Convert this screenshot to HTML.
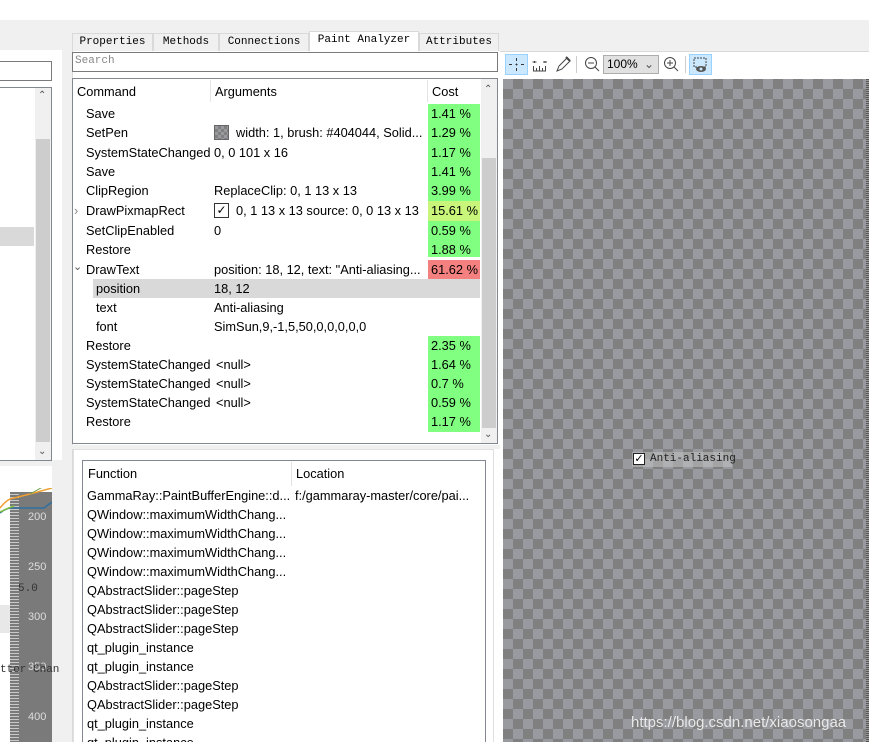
<!DOCTYPE html>
<html><head><meta charset="utf-8"><style>
*{margin:0;padding:0;box-sizing:border-box}
html,body{width:869px;height:742px;overflow:hidden}
body{background:#f0f0f0;font-family:"Liberation Sans",sans-serif;font-size:12.8px;color:#000;position:relative}
.a{position:absolute}
.t{position:absolute;white-space:nowrap;line-height:19px}
.mono{font-family:"Liberation Mono",monospace;font-size:11px}
.tab{position:absolute;top:33px;height:18px;border:1px solid #d9d9d9;border-bottom:none;background:#f0f0f0;font-family:"Liberation Mono",monospace;font-size:11px;line-height:17px;text-align:center}
.g{background:#80ff80}
.chk{background:conic-gradient(#808080 25%,#999a9f 0 50%,#808080 0 75%,#999a9f 0);background-size:20px 20px}
</style></head><body>
<div class="a" style="left:0;top:0;width:869px;height:20px;background:#fff"></div>
<div class="a" style="left:0;top:50px;width:62px;height:410px;background:#fff"></div>
<div class="a" style="left:0;top:61px;width:52px;height:20px;border:1px solid #7a7a7a;border-left:none;background:#fff"></div>
<div class="a" style="left:0;top:87px;width:52px;height:374px;border:1px solid #828790;border-left:none;background:#fff"></div>
<div class="a" style="left:0;top:227px;width:34px;height:19px;background:#d9d9d9"></div>
<div class="a" style="left:35px;top:88px;width:16px;height:372px;background:#f0f0f0"></div>
<div class="a" style="left:36px;top:139px;width:14px;height:303px;background:#cdcdcd"></div>
<div class="t" style="left:38px;top:86px;font-size:10px;color:#555">&#8963;</div>
<div class="t" style="left:38px;top:442px;font-size:10px;color:#555">&#8964;</div>
<div class="a" style="left:0;top:466px;width:52px;height:276px;background:#fff"></div>
<div class="a" style="left:0;top:605px;width:30px;height:28px;background:#e8e8e8"></div>
<div class="a" style="left:10px;top:492px;width:42px;height:250px;background:#7a7a7a"></div>
<div class="a" style="left:10px;top:492px;width:9px;height:250px;background:repeating-linear-gradient(#7a7a7a 0 2px,#c8c8c8 2px 3px)"></div>
<svg class="a" style="left:0;top:488px" width="52" height="30"><path d="M0 20 Q8 10 14 10 L30 6 L52 0" stroke="#f0a030" fill="none" stroke-width="1.5"/><path d="M0 25 Q6 20 12 20 L44 20 L52 14" stroke="#3070a0" fill="none" stroke-width="1.5"/><path d="M0 24 Q8 20 14 18" stroke="#80c040" fill="none" stroke-width="1.5"/><path d="M30 6 L48 -4" stroke="#70a050" fill="none"/></svg>
<div class="t" style="left:28px;top:508px;font-size:11px;color:#ddd">200</div>
<div class="t" style="left:28px;top:558px;font-size:11px;color:#ddd">250</div>
<div class="t" style="left:28px;top:608px;font-size:11px;color:#ddd">300</div>
<div class="t" style="left:28px;top:658px;font-size:11px;color:#ddd">350</div>
<div class="t" style="left:28px;top:708px;font-size:11px;color:#ddd">400</div>
<div class="t mono" style="left:18px;top:580px;color:#333">5.0</div>
<div class="t mono" style="left:0;top:661px;color:#333">tter Chan</div>
<div class="tab" style="left:72px;width:81px">Properties</div>
<div class="tab" style="left:153px;width:66px">Methods</div>
<div class="tab" style="left:219px;width:90px">Connections</div>
<div class="tab" style="left:309px;top:31px;height:21px;width:110px;background:#fff">Paint Analyzer</div>
<div class="tab" style="left:419px;width:80px">Attributes</div>
<div class="a" style="left:72px;top:51px;width:428px;height:691px;background:#fff;border-left:1px solid #d9d9d9"></div>
<div class="a" style="left:72px;top:52px;width:426px;height:20px;border:1px solid #7a7a7a;background:#fff"></div>
<div class="t mono" style="left:75px;top:52px;color:#888">Search</div>
<div class="a" style="left:72px;top:78px;width:426px;height:366px;border:1px solid #828790;background:#fff"></div>
<div class="a" style="left:210px;top:80px;width:1px;height:22px;background:#e5e5e5"></div>
<div class="a" style="left:427px;top:80px;width:1px;height:22px;background:#e5e5e5"></div>
<div class="t" style="left:77px;top:82px">Command</div>
<div class="t" style="left:215px;top:82px">Arguments</div>
<div class="t" style="left:432px;top:82px">Cost</div>
<div class="a" style="left:481px;top:79px;width:16px;height:364px;background:#f0f0f0"></div>
<div class="a" style="left:482px;top:158px;width:14px;height:270px;background:#cdcdcd"></div>
<div class="t" style="left:484px;top:80px;font-size:10px;color:#555">&#8963;</div>
<div class="t" style="left:484px;top:425px;font-size:10px;color:#555">&#8964;</div>
<div class="a" style="left:93px;top:279px;width:387px;height:19px;background:#d9d9d9"></div>
<div class="a g" style="left:428px;top:104px;width:52px;height:153px"></div>
<div class="a" style="left:428px;top:201px;width:52px;height:20px;background:#c8f57a"></div>
<div class="a" style="left:428px;top:260px;width:52px;height:19px;background:#f58080"></div>
<div class="a g" style="left:428px;top:336px;width:52px;height:96px"></div>
<div class="t" style="left:86px;top:104px">Save</div><div class="t" style="left:431px;top:104px">1.41 %</div>
<div class="t" style="left:86px;top:123px">SetPen</div><div class="a chk" style="left:214px;top:125px;width:15px;height:15px;background-size:6px 6px;border:1px solid #666"></div><div class="t" style="left:236px;top:123px">width: 1, brush: #404044, Solid...</div><div class="t" style="left:431px;top:123px">1.29 %</div>
<div class="t" style="left:86px;top:143px">SystemStateChanged</div><div class="t" style="left:214px;top:143px">0, 0 101 x 16</div><div class="t" style="left:431px;top:143px">1.17 %</div>
<div class="t" style="left:86px;top:162px">Save</div><div class="t" style="left:431px;top:162px">1.41 %</div>
<div class="t" style="left:86px;top:181px">ClipRegion</div><div class="t" style="left:214px;top:181px">ReplaceClip: 0, 1 13 x 13</div><div class="t" style="left:431px;top:181px">3.99 %</div>
<div class="t" style="left:74px;top:201px;color:#888">&#8250;</div><div class="t" style="left:86px;top:201px">DrawPixmapRect</div><div class="a" style="left:214px;top:203px;width:15px;height:15px;border:1px solid #333;font-size:12px;line-height:13px;text-align:center">&#10003;</div><div class="t" style="left:236px;top:201px">0, 1 13 x 13 source: 0, 0 13 x 13</div><div class="t" style="left:431px;top:201px">15.61 %</div>
<div class="t" style="left:86px;top:221px">SetClipEnabled</div><div class="t" style="left:214px;top:221px">0</div><div class="t" style="left:431px;top:221px">0.59 %</div>
<div class="t" style="left:86px;top:240px">Restore</div><div class="t" style="left:431px;top:240px">1.88 %</div>
<div class="t" style="left:73px;top:258px;color:#555;font-size:11px">&#8964;</div><div class="t" style="left:86px;top:260px">DrawText</div><div class="t" style="left:214px;top:260px">position: 18, 12, text: "Anti-aliasing...</div><div class="t" style="left:431px;top:260px">61.62 %</div>
<div class="t" style="left:96px;top:279px">position</div><div class="t" style="left:214px;top:279px">18, 12</div>
<div class="t" style="left:96px;top:298px">text</div><div class="t" style="left:214px;top:298px">Anti-aliasing</div>
<div class="t" style="left:96px;top:317px">font</div><div class="t" style="left:214px;top:317px">SimSun,9,-1,5,50,0,0,0,0,0</div>
<div class="t" style="left:86px;top:336px">Restore</div><div class="t" style="left:431px;top:336px">2.35 %</div>
<div class="t" style="left:86px;top:355px">SystemStateChanged</div><div class="t" style="left:216px;top:355px">&lt;null&gt;</div><div class="t" style="left:431px;top:355px">1.64 %</div>
<div class="t" style="left:86px;top:374px">SystemStateChanged</div><div class="t" style="left:216px;top:374px">&lt;null&gt;</div><div class="t" style="left:431px;top:374px">0.7 %</div>
<div class="t" style="left:86px;top:393px">SystemStateChanged</div><div class="t" style="left:216px;top:393px">&lt;null&gt;</div><div class="t" style="left:431px;top:393px">0.59 %</div>
<div class="t" style="left:86px;top:412px">Restore</div><div class="t" style="left:431px;top:412px">1.17 %</div>
<div class="a" style="left:72px;top:445px;width:428px;height:4px;background:#f0f0f0"></div>
<div class="a" style="left:73px;top:449px;width:421px;height:293px;border:1px solid #e0e0e0;border-bottom:none;background:#fff"></div>
<div class="a" style="left:82px;top:460px;width:404px;height:282px;border:1px solid #828790;border-bottom:none;background:#fff;overflow:hidden"></div>
<div class="a" style="left:291px;top:462px;width:1px;height:24px;background:#e5e5e5"></div>
<div class="t" style="left:88px;top:464px">Function</div><div class="t" style="left:296px;top:464px">Location</div>
<div class="t" style="left:87px;top:486px">GammaRay::PaintBufferEngine::d...</div><div class="t" style="left:295px;top:486px">f:/gammaray-master/core/pai...</div>
<div class="t" style="left:87px;top:505px">QWindow::maximumWidthChang...</div>
<div class="t" style="left:87px;top:524px">QWindow::maximumWidthChang...</div>
<div class="t" style="left:87px;top:543px">QWindow::maximumWidthChang...</div>
<div class="t" style="left:87px;top:562px">QWindow::maximumWidthChang...</div>
<div class="t" style="left:87px;top:581px">QAbstractSlider::pageStep</div>
<div class="t" style="left:87px;top:600px">QAbstractSlider::pageStep</div>
<div class="t" style="left:87px;top:619px">QAbstractSlider::pageStep</div>
<div class="t" style="left:87px;top:638px">qt_plugin_instance</div>
<div class="t" style="left:87px;top:657px">qt_plugin_instance</div>
<div class="t" style="left:87px;top:676px">QAbstractSlider::pageStep</div>
<div class="t" style="left:87px;top:695px">QAbstractSlider::pageStep</div>
<div class="t" style="left:87px;top:714px">qt_plugin_instance</div>
<div class="t" style="left:87px;top:733px;height:9px;overflow:hidden">qt_plugin_instance</div>
<div class="a" style="left:500px;top:51px;width:369px;height:691px;background:#fff"></div>
<div class="a" style="left:500px;top:51px;width:369px;height:1px;background:#d9d9d9"></div>
<div class="a" style="left:505px;top:54px;width:23px;height:21px;background:#cce8ff;border:1px solid #99d1ff"></div>
<svg class="a" style="left:505px;top:54px" width="23" height="21"><g stroke="#333" stroke-width="1"><path d="M11.5 4v3M11.5 14v3M4 10.5h3M16 10.5h3M11.5 9.5v2M10.5 10.5h2"/></g></svg>
<svg class="a" style="left:531px;top:54px" width="20" height="21"><g stroke="#444"><path d="M3.5 7v2M1.5 8h4M12 8h4M14 7v2M2.5 12v5M5.5 14v3M8.5 12v5M11.5 14v3M14.5 12v5M2 17h13"/></g></svg>
<svg class="a" style="left:553px;top:54px" width="20" height="21"><path d="M4 17l2-5 8-8 3 3-8 8z" fill="none" stroke="#444"/><path d="M13 3l4 4" stroke="#444" stroke-width="2"/></svg>
<div class="a" style="left:576px;top:56px;width:1px;height:17px;background:#ccc"></div>
<svg class="a" style="left:583px;top:55px" width="18" height="19"><circle cx="8" cy="8" r="5.5" fill="none" stroke="#444"/><path d="M5 8h6M12 12l4 4" stroke="#444"/></svg>
<div class="a" style="left:603px;top:55px;width:56px;height:19px;background:#e1e1e1;border:1px solid #adadad;font-size:12px;line-height:17px;padding-left:3px">100%<span style="position:absolute;right:4px;top:0;color:#555">&#8964;</span></div>
<svg class="a" style="left:662px;top:55px" width="18" height="19"><circle cx="8" cy="8" r="5.5" fill="none" stroke="#444"/><path d="M5 8h6M8 5v6M12 12l4 4" stroke="#444"/></svg>
<div class="a" style="left:685px;top:56px;width:1px;height:17px;background:#ccc"></div>
<div class="a" style="left:689px;top:54px;width:23px;height:21px;background:#cce8ff;border:1px solid #99d1ff"></div>
<svg class="a" style="left:689px;top:54px" width="23" height="21"><rect x="5" y="4" width="12" height="9" fill="none" stroke="#444" stroke-dasharray="2 1"/><ellipse cx="12" cy="15" rx="5" ry="3" fill="#555"/><circle cx="12" cy="15" r="1.5" fill="#cce8ff"/></svg>
<div class="a chk" style="left:503px;top:79px;width:363px;height:663px"></div>
<div class="a" style="left:866px;top:79px;width:3px;height:663px;background:repeating-linear-gradient(#555 0 1px,#999 1px 2px)"></div>
<div class="a" style="left:632px;top:452px;width:100px;height:15px;background:rgba(200,200,200,0.5)"></div>
<div class="a" style="left:633px;top:453px;width:12px;height:12px;border:1px solid #222;background:#fff;font-size:11px;line-height:10px;text-align:center">&#10003;</div>
<div class="t" style="left:650px;top:450px;font-family:'Liberation Mono',monospace;font-size:11px;color:#222">Anti-aliasing</div>
<div class="t" style="left:631px;top:713px;font-size:15px;color:#e8e8e8">https://blog.csdn.net/xiaosongaa</div>
</body></html>
